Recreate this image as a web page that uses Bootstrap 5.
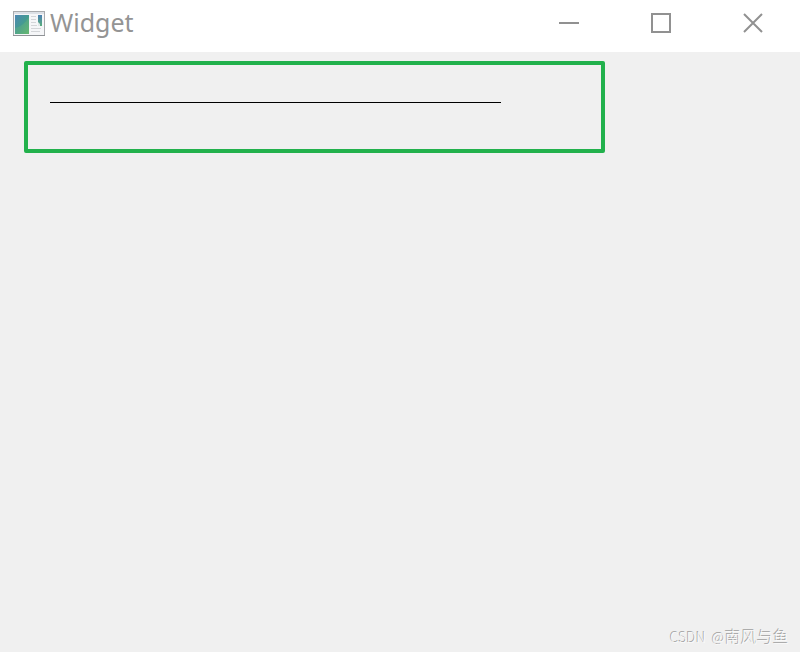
<!DOCTYPE html>
<html lang="en">
<head>
<meta charset="utf-8">
<meta name="viewport" content="width=device-width, initial-scale=1">
<title>Widget</title>
<link rel="stylesheet" href="https://cdn.jsdelivr.net/npm/bootstrap@5.3.0/dist/css/bootstrap.min.css">
<style>
  body { background: #f0f0f0; font-family: "Noto Sans", "Open Sans", sans-serif; }
  .title-bar { height: 52px; padding-left: 12px; padding-right: 1px; }
  .title-text { font-family: "Noto Sans", "Open Sans", sans-serif; font-size: 25px; line-height: 44px; color: #949494; margin-left: 4px; }
  .caption-btn { width: 92px; height: 46px; color: #919191; }
  .caption-btn:hover { background: #e5e5e5; }
  .canvas-area { padding: 9px 24px; }
  .outline-box { width: 581px; max-width: 100%; height: 92px; border: 4px solid #22b14c; border-radius: 2px; padding: 37px 100px 0 22px; }
  .drawn-line { border-top: 1px solid #000; opacity: 1; margin: 0; }
  .credit { font-family: "Noto Sans CJK SC", sans-serif; font-size: 16px; font-weight: 300; line-height: 20px; color: #fafafa; text-shadow: -1px -1px 0 #a0a0a0; padding: 0 11px 5px 0; }
  .credit-latin { font-size: 14px; }
</style>
</head>
<body class="min-vh-100 d-flex flex-column">
<header class="title-bar bg-white d-flex align-items-start">
  <div class="d-flex align-items-center me-auto">
    <svg class="mt-1" width="34" height="28" viewBox="0 0 34 28" aria-hidden="true">
      <defs>
        <linearGradient id="pane" x1="0" y1="0" x2="1" y2="1">
          <stop offset="0" stop-color="#4d87b5"/>
          <stop offset=".5" stop-color="#459b91"/>
          <stop offset="1" stop-color="#62b66b"/>
        </linearGradient>
        <linearGradient id="side" x1="0" y1="0" x2="0" y2="1">
          <stop offset="0" stop-color="#4b80b2"/>
          <stop offset="1" stop-color="#58ad7c"/>
        </linearGradient>
      </defs>
      <rect x="1.5" y="1.5" width="31" height="24" fill="#f5f6f8" stroke="#a9abae"/>
      <path d="M1 25.5h32" stroke="#8f9296"/>
      <path d="M2 3h30" stroke="#dce0e6" stroke-width="2"/>
      <rect x="3" y="5" width="14" height="19" fill="url(#pane)"/>
      <path d="M3 18Q12 16 17 7v17H3z" fill="#72bd79" opacity=".3"/>
      <path d="M19 6.500h5M19 9.500h5M19 12.500h5M19 15.500h6M19 18.500h10M19 21.500h9" stroke="#d3d5d8"/>
      <rect x="26" y="5" width="4" height="11" fill="url(#side)"/>
      <path d="M26 12l2 2v2h-2z" fill="#dfe9e8"/>
    </svg>
    <h1 class="title-text fw-normal mb-0">Widget</h1>
  </div>
  <button type="button" class="caption-btn btn rounded-0 border-0 p-0 d-flex align-items-center justify-content-center" aria-label="Minimize">
    <svg width="20" height="20" viewBox="0 0 20 20" stroke="currentColor" stroke-width="2"><path d="M0 10h20"/></svg>
  </button>
  <button type="button" class="caption-btn btn rounded-0 border-0 p-0 d-flex align-items-center justify-content-center" aria-label="Maximize">
    <svg width="20" height="20" viewBox="0 0 20 20" fill="none" stroke="currentColor" stroke-width="2"><path d="M1 1h18v18H1z"/></svg>
  </button>
  <button type="button" class="caption-btn btn rounded-0 border-0 p-0 d-flex align-items-center justify-content-center" aria-label="Close">
    <svg width="20" height="20" viewBox="0 0 20 20" stroke="currentColor" stroke-width="2"><path d="M1 1l18 18M19 1L1 19"/></svg>
  </button>
</header>
<main class="canvas-area flex-grow-1">
  <div class="outline-box"><hr class="drawn-line"></div>
</main>
<footer class="credit text-end"><span class="credit-latin">CSDN&nbsp; @</span>南风与鱼</footer>
</body>
</html>
